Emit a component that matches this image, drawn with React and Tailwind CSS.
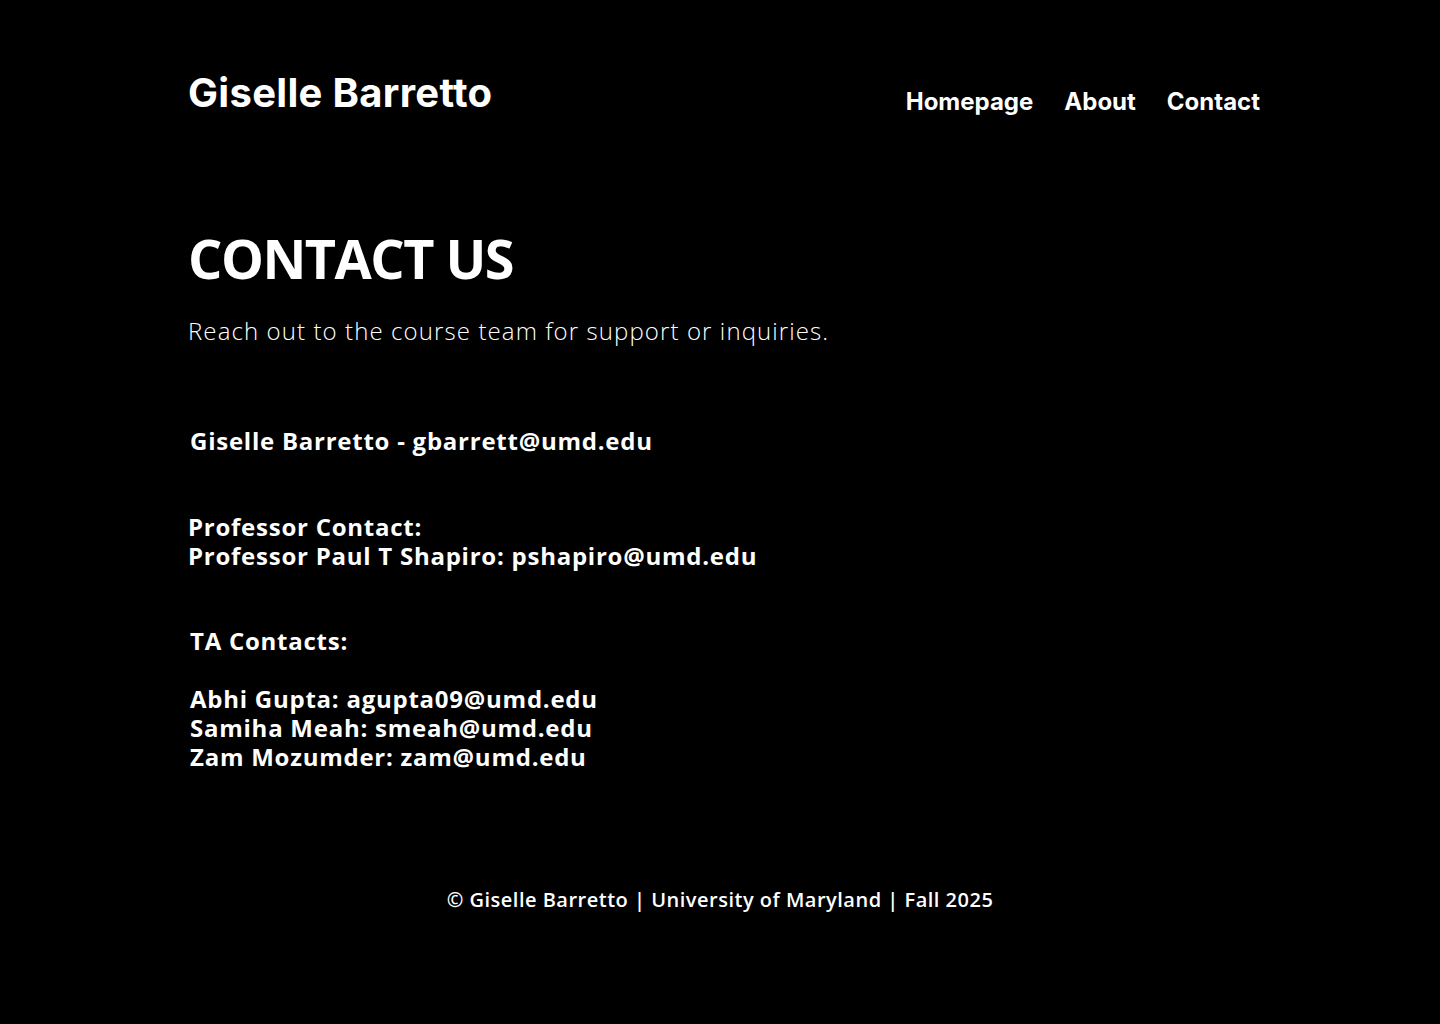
export default function App() {
  const mont = { fontFamily: '"Open Sans", "Noto Sans", sans-serif' };
  return (
    <div className="min-h-screen w-full bg-black text-white">
      <div className="mx-auto w-[1080px] pl-[8px]">
        <header className="flex items-start justify-between pt-[69px]" style={{ fontFamily: 'Inter, "Liberation Sans", sans-serif' }}>
          <h1 className="text-[40px] font-bold leading-[48px] tracking-[0.3px]">Giselle Barretto</h1>
          <nav className="mt-[18px] flex gap-[31px] text-[24px] font-bold leading-[29px]">
            <a href="#">Homepage</a>
            <a href="#">About</a>
            <a href="#">Contact</a>
          </nav>
        </header>

        <main style={mont}>
          <h2 className="mt-[108px] text-[54px] font-bold leading-[66px] tracking-[-1.5px]">CONTACT US</h2>
          <p className="mt-[25px] text-[24px] font-light leading-[29px] tracking-[1.1px]">Reach out to the course team for support or inquiries.</p>

          <div className="mt-[81px] text-[24px] font-bold leading-[29px] tracking-[0.75px]">
            <p className="ml-[2px]">Giselle Barretto - gbarrett@umd.edu</p>
            <p className="mt-[57px]">Professor Contact:<br />Professor Paul T Shapiro: pshapiro@umd.edu</p>
            <p className="ml-[2px] mt-[56px]">TA Contacts:</p>
            <p className="ml-[2px] mt-[29px]">Abhi Gupta: agupta09@umd.edu<br />Samiha Meah: smeah@umd.edu<br />Zam Mozumder: zam@umd.edu</p>
          </div>
        </main>
      </div>
      <footer className="mt-[117px] pb-[100px] text-center text-[20px] font-semibold leading-[24px] tracking-[0.5px]" style={mont}>
        © Giselle Barretto | University of Maryland | Fall 2025
      </footer>
    </div>
  );
}
